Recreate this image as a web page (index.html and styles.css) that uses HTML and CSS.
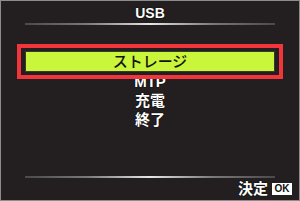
FILE: index.html
```html
<!DOCTYPE html>
<html lang="ja">
<head>
<meta charset="utf-8">
<title>USB</title>
<link rel="stylesheet" href="styles.css">
</head>
<body>
<div class="screen">
  <div class="title">USB</div>
  <div class="rule"></div>
  <ul class="menu">
    <li class="item selected">ストレージ</li>
    <li class="item">MTP</li>
    <li class="item">充電</li>
    <li class="item">終了</li>
  </ul>
  <div class="rule bottom"></div>
  <div class="footer">
    <span class="label">決定</span>
    <span class="ok">OK</span>
  </div>
</div>
</body>
</html>
```
FILE: styles.css
```css
html, body {
  margin: 0;
  padding: 0;
  background: #231f20;
}
.screen {
  box-sizing: border-box;
  width: 300px;
  height: 201px;
  border: 1px solid #8c8c8c;
  background: #231f20;
  overflow: hidden;
  font-family: "Liberation Sans", "Noto Sans CJK JP", sans-serif;
  color: #fff;
}
.title {
  padding-top: 4px;
  height: 16px;
  line-height: 16px;
  text-align: center;
  font-size: 14px;
  font-weight: bold;
  text-shadow: 0 0 1px #000, 0 0 1px #000;
}
.rule {
  margin: 2px 24px 0;
  height: 2px;
  background: linear-gradient(to right, #4a4a4a, #7a7a7a 25%, #e6e6e6 50%, #7a7a7a 75%, #4a4a4a);
}
.rule.bottom {
  margin-top: 47px;
}
.menu {
  list-style: none;
  margin: 26px 0 0;
  padding: 0;
}
.item {
  height: 19px;
  line-height: 19px;
  text-align: center;
  font-size: 15px;
  font-weight: bold;
  text-shadow: 0 0 1px #000, 0 0 1px #000;
}
.item.selected {
  position: relative;
  margin: 0 24px;
  height: 21px;
  line-height: 21px;
  background: #c9f53a;
  color: #111;
  font-weight: 500;
  text-shadow: none;
  box-shadow: inset 0 0 0 1px #3a3a2a;
}
.item.selected::after {
  content: "";
  position: absolute;
  left: -8px;
  right: -8px;
  top: -7px;
  bottom: -7px;
  border: 4px solid #f2353a;
}
.footer {
  margin-top: 3px;
  height: 16px;
  padding-right: 7px;
  display: flex;
  justify-content: flex-end;
  align-items: center;
  gap: 4px;
}
.label {
  font-size: 15px;
  font-weight: bold;
  line-height: 16px;
  text-shadow: 0 0 1px #000, 0 0 1px #000;
}
.ok {
  width: 20px;
  height: 12px;
  background: #fff;
  color: #111;
  font-size: 10px;
  font-weight: bold;
  line-height: 12px;
  text-align: center;
}
```
